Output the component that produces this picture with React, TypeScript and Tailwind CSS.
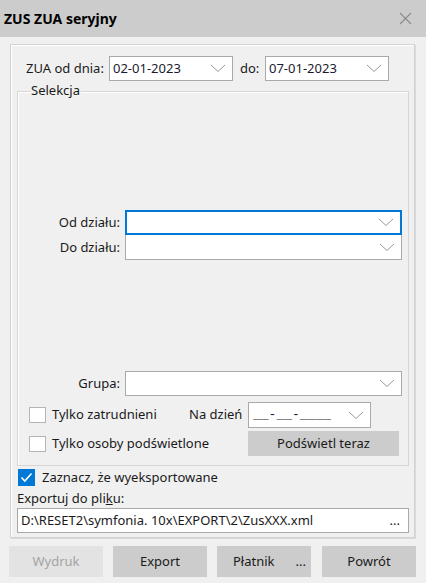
import { FC, ReactNode } from "react";

const Chevron: FC = () => (
  <svg width="16" height="9" viewBox="0 0 16 9" className="shrink-0">
    <path d="M1 1 L8 7.5 L15 1" fill="none" stroke="#9a9a9a" strokeWidth="1" />
  </svg>
);

interface ComboProps {
  value?: string;
  className?: string;
  valueClass?: string;
  focused?: boolean;
}

const Combo: FC<ComboProps> = ({ value, className = "", valueClass = "", focused }) => (
  <div
    className={`flex h-[25px] items-center justify-between bg-white pl-[3px] pr-[6px] ${
      focused ? "border-2 border-[#0078d7]" : "border border-[#a9a9a9]"
    } ${className}`}
  >
    <span className={`text-[13px] text-[#1b1b2e] ${valueClass}`}>{value}</span>
    <Chevron />
  </div>
);

const Check: FC<{ checked?: boolean }> = ({ checked }) =>
  checked ? (
    <div className="flex h-[17px] w-[17px] items-center justify-center bg-[#0078d7]">
      <svg width="13" height="11" viewBox="0 0 13 11">
        <path d="M1.5 5.5 L4.8 9 L11.5 1.5" fill="none" stroke="white" strokeWidth="1.6" />
      </svg>
    </div>
  ) : (
    <div className="h-[16px] w-[17px] border border-[#b5b5b5] bg-white" />
  );

const Btn: FC<{ children: ReactNode; disabled?: boolean; className?: string }> = ({
  children,
  disabled,
  className = "justify-center",
}) => (
  <div
    className={`flex h-[31px] w-[94px] items-center text-[13px] ${
      disabled ? "bg-[#e3e3e3] text-[#a3a3a3]" : "bg-[#cccccc] text-[#1a1a1a]"
    } ${className}`}
  >
    {children}
  </div>
);

export default function App() {
  return (
    <div className="h-[583px] w-[426px] overflow-hidden bg-[#f0f0f0] font-['Noto_Sans','Open_Sans',sans-serif] text-[13px] text-[#1a1a1a]">
      <div className="flex h-[37px] items-center justify-between bg-[#cccccc] pl-[4px] pr-[14px]">
        <span className="text-[14px] font-bold text-black">ZUS ZUA seryjny</span>
        <svg width="13" height="13" viewBox="0 0 13 13">
          <path d="M1 1 L12 12 M12 1 L1 12" stroke="#8a8a8a" strokeWidth="1.1" />
        </svg>
      </div>

      <div className="ml-[10px] mt-[7px] h-[494px] w-[405px] border border-[#d2d2d2] shadow-[inset_1px_1px_0_#ffffff,1px_1px_0_#dadada]">
        <div className="mt-[11px] flex h-[25px] items-center pl-[15px]">
          <span className="w-[83px]">ZUA od dnia:</span>
          <Combo value="02-01-2023" className="w-[124px]" />
          <span className="ml-[7px] w-[25px]">do:</span>
          <Combo value="07-01-2023" className="w-[124px]" />
        </div>

        <div className="relative ml-[6px] mt-[10px] h-[375px] w-[392px] border border-[#d6d6d6] shadow-[inset_1px_1px_0_#ffffff]">
          <span className="absolute -top-[11px] left-[13px] bg-[#f0f0f0] pr-[1px] leading-[18px]">
            Selekcja
          </span>

          <div className="mt-[118px] flex flex-col">
            <div className="flex items-center">
              <span className="w-[102px] text-right">Od działu:</span>
              <div className="ml-[5px] w-[277px]">
                <Combo focused />
              </div>
            </div>
            <div className="flex items-center">
              <span className="w-[102px] text-right">Do działu:</span>
              <div className="ml-[5px] w-[277px]">
                <Combo className="border-t-0 h-[25px]" />
              </div>
            </div>
          </div>

          <div className="mt-[111px] flex items-center">
            <span className="w-[102px] text-right">Grupa:</span>
            <div className="ml-[5px] w-[277px]">
              <Combo />
            </div>
          </div>

          <div className="mt-[6px] flex h-[26px] items-center pl-[11px]">
            <Check />
            <span className="ml-[6px] w-[137px]">Tylko zatrudnieni</span>
            <span className="w-[59px]">Na dzień</span>
            <Combo
              value="__-__-____"
              valueClass="font-['Liberation_Mono',monospace] text-[12px] pl-[1px]"
              className="h-[26px] w-[123px]"
            />
          </div>

          <div className="mt-[3px] flex h-[25px] items-center pl-[11px]">
            <Check />
            <span className="ml-[6px] w-[196px]">Tylko osoby podświetlone</span>
            <div className="flex h-[25px] w-[151px] items-center justify-center bg-[#cccccc]">
              Podświetl teraz
            </div>
          </div>
        </div>

        <div className="mt-[2px] flex h-[19px] items-center pl-[7px]">
          <Check checked />
          <span className="ml-[7px]">Zaznacz, że wyeksportowane</span>
        </div>
        <div className="mt-[2px] pl-[6px] leading-[18px]">
          Exportuj do pli<span className="underline">k</span>u:
        </div>
        <div className="ml-[6px] mt-[1px] flex h-[25px] w-[392px] items-center justify-between border border-[#a9a9a9] bg-white pl-[3px] pr-[8px]">
          <span>D:\RESET2\symfonia. 10x\EXPORT\2\ZusXXX.xml</span>
          <span>...</span>
        </div>
      </div>

      <div className="mt-[8px] flex pl-[9px]">
        <Btn disabled>Wydruk</Btn>
        <Btn className="ml-[10px] justify-center">Export</Btn>
        <Btn className="ml-[10px] justify-between pl-[16px] pr-[5px]">
          <span>Płatnik</span>
          <span>...</span>
        </Btn>
        <Btn className="ml-[11px] justify-center">Powrót</Btn>
      </div>
    </div>
  );
}
